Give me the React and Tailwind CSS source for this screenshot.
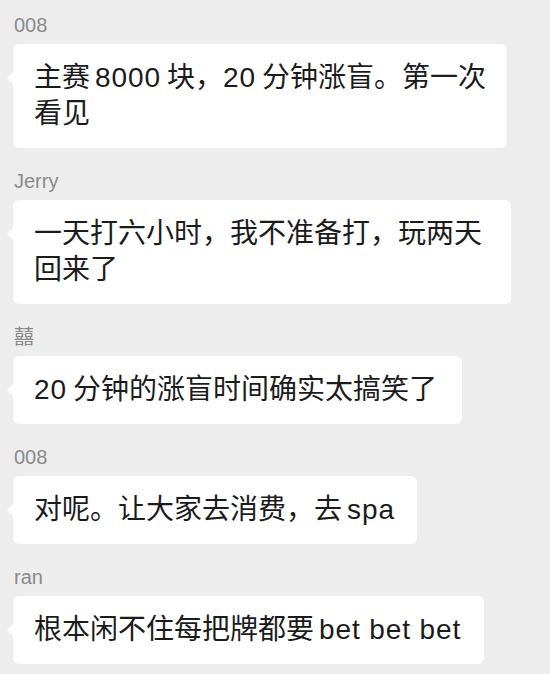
import React from "react";

// latin runs inside CJK text get a little breathing room, like the phone renders it
const L = ({ children, left = true, right = true }) => (
  <span className={`tracking-[0.9px] ${left ? "ml-[5px]" : ""} ${right ? "mr-[6px]" : ""}`}>{children}</span>
);

const messages = [
  {
    name: "008",
    lines: [
      <>
        主赛<L>8000</L>块，<L left={false}>20</L>分钟涨盲。第一次
      </>,
      "看见",
    ],
    width: "w-[494px]",
  },
  { name: "Jerry", lines: ["一天打六小时，我不准备打，玩两天", "回来了"], width: "w-[498px]" },
  {
    name: "囍",
    lines: [
      <>
        <L left={false}>20</L>分钟的涨盲时间确实太搞笑了
      </>,
    ],
    width: "w-[449px]",
  },
  {
    name: "008",
    lines: [
      <>
        对呢。让大家去消费，去<L right={false}>spa</L>
      </>,
    ],
    width: "w-[404px]",
  },
  {
    name: "ran",
    lines: [
      <>
        根本闲不住每把牌都要<L right={false}>bet bet bet</L>
      </>,
    ],
    width: "w-[471px]",
  },
];

const Bubble = ({ msg }) => (
  <div className="flex flex-col">
    {/* sender name */}
    <div className="pl-[14px] text-[20px] leading-[24px] text-[#8a8a8a]">{msg.name}</div>
    <div className="mt-[7px] pl-[13px]">
      <div
        className={`relative ${msg.width} rounded-[6px] bg-white py-[16px] pl-[21px] text-[28px] leading-[36px] text-[#1b1b1b] whitespace-nowrap`}>
        {/* little tail */}
        <span className="absolute left-[-6px] top-[28px] h-0 w-0 border-y-[6px] border-r-[6px] border-y-transparent border-r-white" />
        {msg.lines.map((l, i) => (
          <div key={i}>{l}</div>
        ))}
      </div>
    </div>
  </div>
);

export default function App() {
  return (
    <div
      className="h-[674px] w-[550px] overflow-hidden bg-[#ededed]"
      style={{ fontFamily: '"Liberation Sans", "Noto Sans CJK SC", sans-serif' }}>
      <div className="flex flex-col gap-[21px] pt-[13px]">
        {messages.map((m, i) => (
          <Bubble key={i} msg={m} />
        ))}
      </div>
    </div>
  );
}
